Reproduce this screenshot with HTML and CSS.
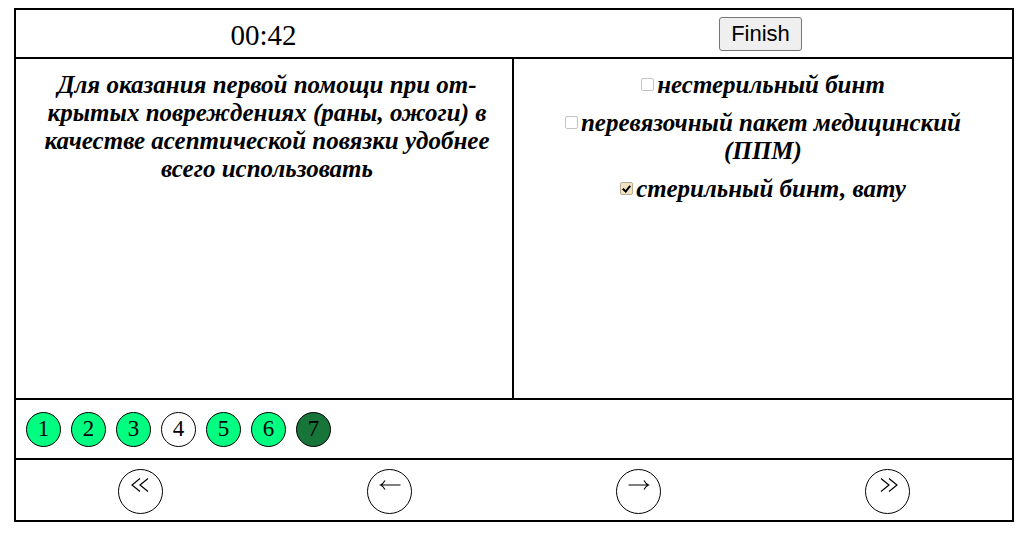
FILE: index.html
```html
<!DOCTYPE html>
<html lang="ru">
<head>
<meta charset="utf-8">
<link rel="stylesheet" href="styles.css">
</head>
<body>
<div class="test">
  <div class="row header">
    <div class="cell timer">00:42</div>
    <div class="cell finish"><button class="finish-btn">Finish</button></div>
  </div>
  <div class="row content">
    <div class="cell question">Для оказания первой помощи при от-крытых повреждениях (раны, ожоги) в качестве асептической повязки удобнее всего использовать</div>
    <div class="cell answers">
      <label class="answer"><input type="checkbox" class="cb">нестерильный бинт</label>
      <label class="answer"><input type="checkbox" class="cb">перевязочный пакет медицинский (ППМ)</label>
      <label class="answer"><input type="checkbox" class="cb" checked>стерильный бинт, вату</label>
    </div>
  </div>
  <div class="row pager">
    <span class="dot done">1</span>
    <span class="dot done">2</span>
    <span class="dot done">3</span>
    <span class="dot">4</span>
    <span class="dot done">5</span>
    <span class="dot done">6</span>
    <span class="dot current">7</span>
  </div>
  <div class="row nav">
    <div class="nav-cell"><span class="nav-btn" title="≪"><svg class="ico" width="24" height="16" viewBox="0 0 24 16"><path d="M11 1.5 L3 8 L11 14.5 M19 1.5 L11 8 L19 14.5" fill="none" stroke="#000" stroke-width="1.2"/></svg></span></div>
    <div class="nav-cell"><span class="nav-btn" title="←"><svg class="ico" width="24" height="16" viewBox="0 0 24 16"><path d="M2.5 8 H22.5 M7 3.5 Q5 7 2.5 8 Q5 9 7 12.5" fill="none" stroke="#000" stroke-width="1.1"/></svg></span></div>
    <div class="nav-cell"><span class="nav-btn" title="→"><svg class="ico" width="24" height="16" viewBox="0 0 24 16"><path d="M1.5 8 H21.5 M17 3.5 Q19 7 21.5 8 Q19 9 17 12.5" fill="none" stroke="#000" stroke-width="1.1"/></svg></span></div>
    <div class="nav-cell"><span class="nav-btn" title="≫"><svg class="ico" width="24" height="16" viewBox="0 0 24 16"><path d="M5 1.5 L13 8 L5 14.5 M13 1.5 L21 8 L13 14.5" fill="none" stroke="#000" stroke-width="1.2"/></svg></span></div>
  </div>
</div>
</body>
</html>
```
FILE: styles.css
```css
body {
  margin: 8px;
  font-family: "Liberation Serif", "Times New Roman", serif;
  color: #000;
  background: #fff;
}
.test {
  margin-left: 6px;
  width: 1000px;
  box-sizing: border-box;
  border: 2px solid #000;
  display: flex;
  flex-direction: column;
}
.row {
  display: flex;
}
.header {
  height: 47px;
  border-bottom: 2px solid #000;
}
.header .cell {
  flex: 1;
  display: flex;
  align-items: center;
  justify-content: center;
}
.timer {
  font-size: 29px;
  padding-top: 3px;
  padding-right: 2px;
}
.finish {
  padding-right: 4px;
}
.finish-btn {
  font-family: "Liberation Sans", Arial, sans-serif;
  font-size: 22px;
  padding: 1px 8px;
  height: 34px;
  width: 83px;
  border: 1px solid #767676;
  border-radius: 3px;
  background: #efefef;
  color: #000;
  margin-top: 1px;
}
.content {
  height: 339px;
  border-bottom: 2px solid #000;
}
.content .cell {
  width: 50%;
  box-sizing: border-box;
  font-weight: bold;
  font-style: italic;
  font-size: 25px;
  text-align: center;
}
.question {
  border-right: 2px solid #000;
  padding: 12px 18px 0 24px;
  line-height: 28px;
}
.answers {
  display: flex;
  flex-direction: column;
  align-items: center;
  padding: 12px 40px 0 40px;
  gap: 10px;
}
.answer {
  line-height: 28px;
  display: block;
}
.cb {
  appearance: none;
  -webkit-appearance: none;
  width: 13px;
  height: 13px;
  margin: 0 3px 0 0;
  border: 1px solid #c4c4c4;
  border-radius: 2px;
  background: #fff;
  vertical-align: 2px;
  position: relative;
}
.cb:checked {
  background: #f0e2c4;
  border-color: #b8ab90;
}
.cb:checked::after {
  content: "";
  position: absolute;
  left: 3px;
  top: 1px;
  width: 3px;
  height: 6px;
  border: solid #000;
  border-width: 0 2px 2px 0;
  transform: rotate(40deg);
}
.pager {
  height: 58px;
  border-bottom: 2px solid #000;
  align-items: center;
  padding-left: 10px;
  gap: 10px;
}
.dot {
  width: 33px;
  height: 33px;
  border: 1px solid #000;
  border-radius: 50%;
  display: flex;
  align-items: center;
  justify-content: center;
  font-size: 23px;
  background: #fff;
}
.dot.done {
  background: #00ff80;
}
.dot.current {
  background: #18753a;
}
.nav {
  height: 60px;
}
.nav-cell {
  flex: 1;
  display: flex;
  align-items: center;
  justify-content: center;
}
.nav-btn {
  width: 43px;
  height: 43px;
  border: 1px solid #000;
  border-radius: 50%;
  display: flex;
  justify-content: center;
  align-items: flex-start;
  margin-top: 2px;
}
.ico {
  display: block;
  margin-top: 7px;
}
```
